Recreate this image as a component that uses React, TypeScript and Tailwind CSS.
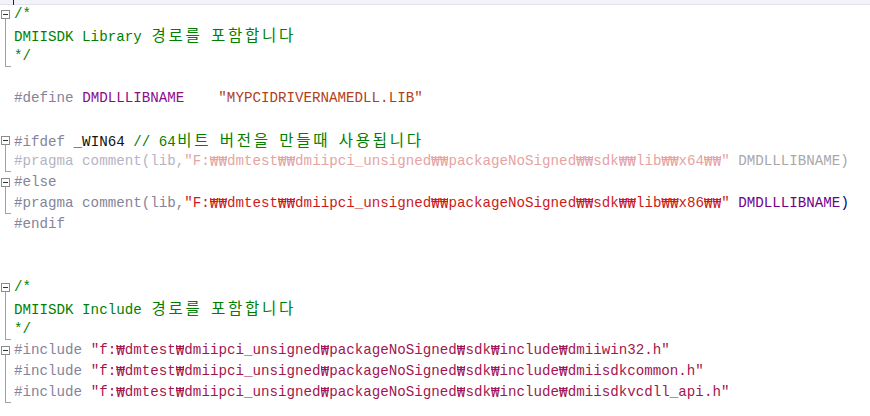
import React from "react";

type Tok = [string, string];

// split text so hangul gets a double-width cell and ₩ a single cell, like the editor's font
function Chars({ text }: { text: string }) {
  const out: React.ReactNode[] = [];
  let run = "";
  const flush = (k: number) => {
    if (run) {
      out.push(<span key={"r" + k}>{run}</span>);
      run = "";
    }
  };
  Array.from(text).forEach((c, i) => {
    const code = c.charCodeAt(0);
    if (c === "₩") {
      flush(i);
      out.push(
        <span key={i} className="inline-block w-[8.55px] overflow-hidden text-center align-top font-['DejaVu_Sans_Mono'] text-[14.2px]">
          {c}
        </span>
      );
    } else if ((code >= 0xac00 && code <= 0xd7af) || (code >= 0x3130 && code <= 0x318f)) {
      flush(i);
      out.push(
        <span key={i} className="inline-block w-[17px] text-center text-[15.5px] font-['Noto_Sans_CJK_KR']">
          {c}
        </span>
      );
    } else {
      run += c;
    }
  });
  flush(-1);
  return <>{out}</>;
}

type Fold = "box" | "line" | "end" | "none";

function Gutter({ fold }: { fold: Fold }) {
  return (
    <div className="relative h-full w-[14px] shrink-0">
      {fold === "box" && (
        <>
          <div className="absolute left-[1px] top-[6px] flex h-[9px] w-[9px] items-center justify-center border border-[#8c8c8c] bg-white">
            <div className="h-px w-[5px] bg-[#333]" />
          </div>
          <div className="absolute left-[5px] top-[15px] h-[6px] w-px bg-[#a0a0a0]" />
        </>
      )}
      {fold === "line" && <div className="absolute left-[5px] top-0 h-full w-px bg-[#a0a0a0]" />}
      {fold === "end" && (
        <>
          <div className="absolute left-[5px] top-0 h-[20px] w-px bg-[#a0a0a0]" />
          <div className="absolute left-[5px] top-[20px] h-px w-[6px] bg-[#a0a0a0]" />
        </>
      )}
    </div>
  );
}

function Line({ toks, fold = "none" }: { toks: Tok[]; fold?: Fold }) {
  return (
    <div className="flex h-[21px] items-center">
      <Gutter fold={fold} />
      <div className="whitespace-pre leading-[21px]">
        {toks.map(([c, t], i) => (
          <span key={i} style={{ color: c }}>
            <Chars text={t} />
          </span>
        ))}
      </div>
    </div>
  );
}

const PP = "#84849a";
const CM = "#008000";
const RED = "#cc1a1a";
const MAC = "#6f008a";
const INC = "#a3154f";

const path64 = '"F:₩₩dmtest₩₩dmiipci_unsigned₩₩packageNoSigned₩₩sdk₩₩lib₩₩x64₩₩"';
const path86 = '"F:₩₩dmtest₩₩dmiipci_unsigned₩₩packageNoSigned₩₩sdk₩₩lib₩₩x86₩₩"';
const inc = '"f:₩dmtest₩dmiipci_unsigned₩packageNoSigned₩sdk₩include₩';

export default function App() {
  return (
    <div className="h-[416px] w-[870px] overflow-hidden bg-white font-['Liberation_Mono','Noto_Sans_CJK_KR',monospace] text-[14.2px]">
      <div className="relative h-[5px] border-b border-[#e2e2ee] bg-[#f2f2fa]">
        <div className="absolute left-[13px] top-0 h-[5px] w-px bg-[#222]" />
      </div>
      <div className="-mt-px">
        <Line fold="box" toks={[[CM, "/*"]]} />
        <Line fold="line" toks={[[CM, "DMIISDK Library 경로를 포함합니다"]]} />
        <Line fold="end" toks={[[CM, "*/"]]} />
        <Line toks={[]} />
        <Line toks={[[PP, "#define "], ["#8a0a8a", "DMDLLLIBNAME"], [PP, "    "], ["#b0401a", '"MYPCIDRIVERNAMEDLL.LIB"']]} />
        <Line toks={[]} />
        <Line fold="box" toks={[[PP, "#ifdef "], ["#111", "_WIN64 "], [CM, "// 64비트 버전을 만들때 사용됩니다"]]} />
        <Line
          fold="end"
          toks={[["#b4b4c4", "#pragma comment(lib,"], ["#e6a3a3", path64], ["#a8a8a8", " DMDLLLIBNAME)"]]}
        />
        <Line fold="box" toks={[[PP, "#else"]]} />
        <Line fold="end" toks={[[PP, "#pragma comment(lib,"], [RED, path86], ["#000", " "], [MAC, "DMDLLLIBNAME"], ["#000080", ")"]]} />
        <Line toks={[[PP, "#endif"]]} />
        <Line toks={[]} />
        <Line toks={[]} />
        <Line fold="box" toks={[[CM, "/*"]]} />
        <Line fold="line" toks={[[CM, "DMIISDK Include 경로를 포함합니다"]]} />
        <Line fold="end" toks={[[CM, "*/"]]} />
        <Line fold="box" toks={[[PP, "#include "], [INC, inc + 'dmiiwin32.h"']]} />
        <Line fold="line" toks={[[PP, "#include "], [INC, inc + 'dmiisdkcommon.h"']]} />
        <Line fold="end" toks={[[PP, "#include "], [INC, inc + 'dmiisdkvcdll_api.h"']]} />
      </div>
    </div>
  );
}
